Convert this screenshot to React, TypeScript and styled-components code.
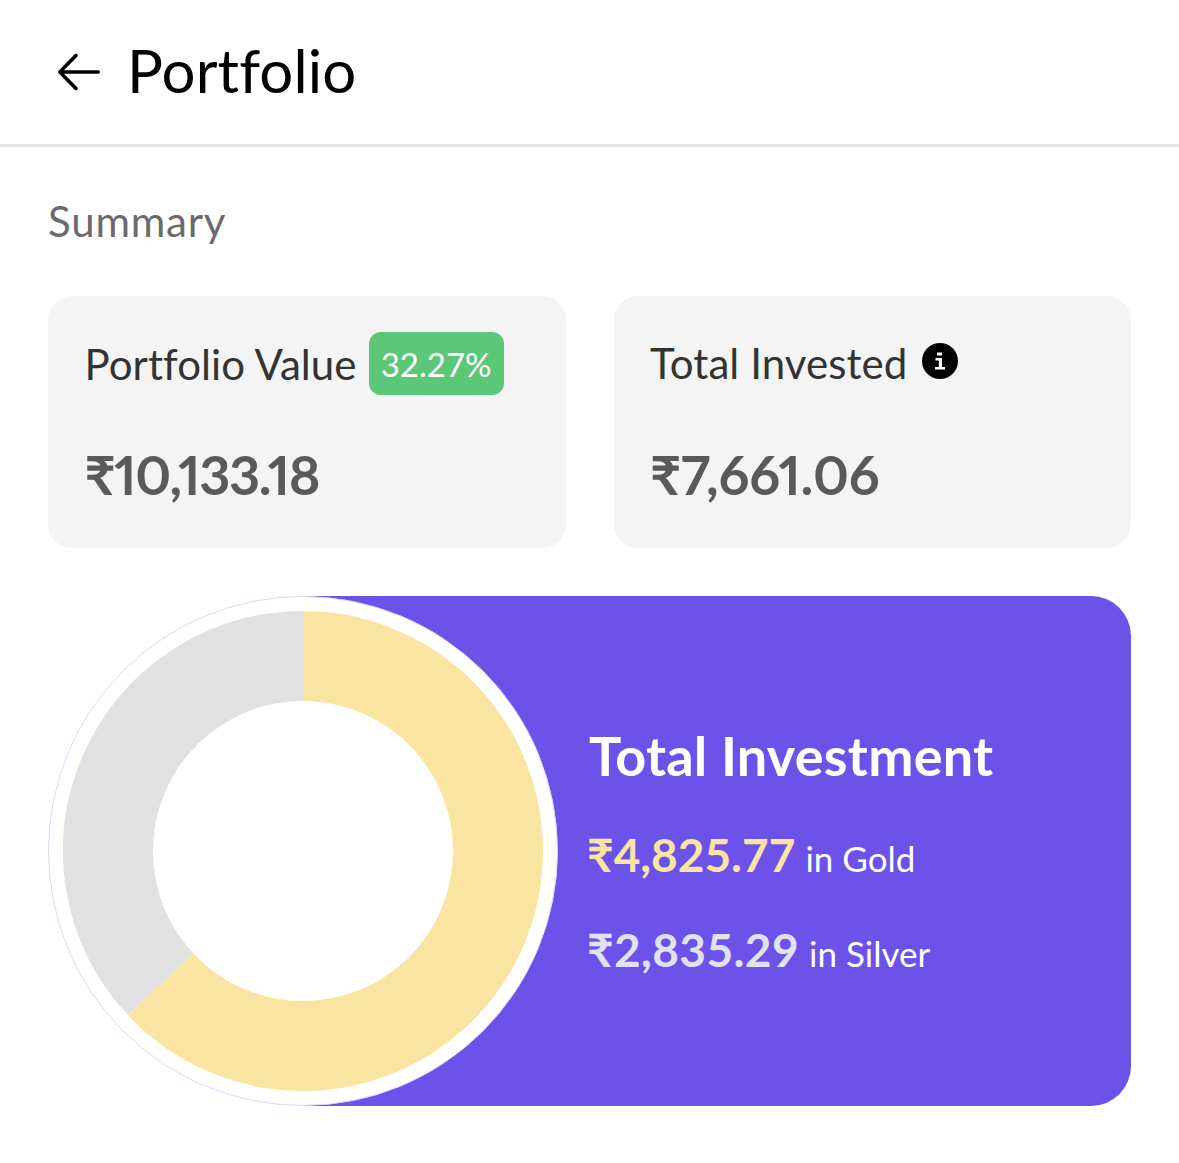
import styled, { createGlobalStyle } from "styled-components";

const GOLD_SHARE = 0.63;

const GlobalStyle = createGlobalStyle`
  html, body {
    margin: 0;
    padding: 0;
    background: #fff;
    font-family: "Lato", "Noto Sans", sans-serif;
  }
`;
const Page = styled.div`
  width: 1179px;
  height: 1163px;
  overflow: hidden;
`;
const Header = styled.header`
  height: 144px;
  display: flex;
  align-items: center;
  gap: 25px;
  padding-left: 56px;
  border-bottom: 3px solid #e5e5e7;
`;
const BackIcon = styled.svg`
  width: 46px;
  height: 46px;
  flex: none;
`;
const Title = styled.h1`
  margin: 0 0 4px;
  font-size: 60px;
  font-weight: 400;
  letter-spacing: 0.1px;
  color: #000;
  line-height: 1;
`;
const Content = styled.main`
  padding: 50px 48px 0;
`;
const SectionTitle = styled.h2`
  margin: 0 0 51px;
  font-size: 42px;
  line-height: 48px;
  font-weight: 400;
  letter-spacing: 0.8px;
  color: #6b6b6b;
`;
const Cards = styled.div`
  display: grid;
  grid-template-columns: 1fr 1fr;
  gap: 48px;
`;
const Card = styled.section`
  height: 252px;
  box-sizing: border-box;
  padding: 36px 36.5px 0;
  background: #f4f4f5;
  border-radius: 24px;
`;
const CardHead = styled.div`
  height: 63px;
  display: flex;
  align-items: center;
  gap: 12px;
`;
const CardLabel = styled.span<{ $lift?: number }>`
  margin-bottom: ${(props) => props.$lift ?? 0}px;
  font-size: 42px;
  font-weight: 400;
  letter-spacing: 0.08px;
  color: #333;
`;
const Badge = styled.span`
  width: 135px;
  height: 63px;
  display: flex;
  align-items: center;
  justify-content: center;
  border-radius: 12px;
  background: #5cc779;
  color: #fff;
  font-size: 33px;
`;
const InfoIcon = styled.svg`
  width: 36px;
  height: 36px;
  flex: none;
  margin: 0 0 5px 3px;
`;
const CardValue = styled.div<{ $track: number }>`
  margin-top: 48px;
  font-size: 54px;
  line-height: 64px;
  font-weight: 700;
  font-variant-numeric: proportional-nums;
  letter-spacing: ${(props) => props.$track}px;
  color: #5a5a5a;
`;
const Hero = styled.section`
  height: 510px;
  margin-top: 48px;
  display: flex;
  align-items: center;
  gap: 31px;
  border-radius: 40px;
  background: linear-gradient(to right, transparent 255px, #6d52ea 255px);
`;
const DonutWrap = styled.div`
  width: 510px;
  height: 510px;
  flex: none;
  box-sizing: border-box;
  border-radius: 50%;
  background: #fff;
  border: 1px solid #dcd7fb;
`;
const Donut = styled.svg`
  display: block;
  width: 100%;
  height: 100%;
`;
const HeroText = styled.div`
  display: flex;
  flex-direction: column;
  padding-top: 37px;
`;
const HeroTitle = styled.h3`
  margin: 0 0 37px;
  font-size: 54px;
  line-height: 64px;
  font-weight: 700;
  letter-spacing: 0.25px;
  color: #fff;
`;
const Holding = styled.div`
  display: flex;
  align-items: baseline;
  gap: 10px;
  height: 95px;
`;
const Amount = styled.span<{ $tone: string; $track?: number }>`
  margin-left: -2px;
  font-size: 46px;
  line-height: 60px;
  font-weight: 700;
  letter-spacing: ${(props) => props.$track ?? 0}px;
  color: ${(props) => props.$tone};
`;
const Metal = styled.span`
  font-size: 35px;
  color: #fff;
`;

function arc(r: number, fromDeg: number, toDeg: number) {
  const pt = (deg: number) => {
    const a = ((deg - 90) * Math.PI) / 180;
    return `${255 + r * Math.cos(a)} ${255 + r * Math.sin(a)}`;
  };
  const large = toDeg - fromDeg > 180 ? 1 : 0;
  return `M${pt(fromDeg)} A${r} ${r} 0 ${large} 1 ${pt(toDeg)}`;
}

export default function App() {
  const split = GOLD_SHARE * 360;
  return (
    <Page>
      <GlobalStyle />
      <Header>
        <BackIcon viewBox="0 0 46 46" fill="none" stroke="#000" strokeWidth="3.6" strokeLinecap="round" strokeLinejoin="round">
          <path d="M20 6.500 3.800 23 20 39.500M3.800 23h38.400" />
        </BackIcon>
        <Title>Portfolio</Title>
      </Header>
      <Content>
        <SectionTitle>Summary</SectionTitle>
        <Cards>
          <Card>
            <CardHead>
              <CardLabel>Portfolio Value</CardLabel>
              <Badge>32.27%</Badge>
            </CardHead>
            <CardValue $track={-1.4}>₹10,133.18</CardValue>
          </Card>
          <Card>
            <CardHead>
              <CardLabel $lift={2}>Total Invested</CardLabel>
              <InfoIcon viewBox="0 0 36 36">
                <circle cx="18" cy="18" r="18" fill="#000" />
                <path d="M15 9.500h5v3h-5zM13.500 15h6.500v9h3v2.500h-10V24h3.800v-6.500h-3.300z" fill="#fff" />
              </InfoIcon>
            </CardHead>
            <CardValue $track={-0.2}>₹7,661.06</CardValue>
          </Card>
        </Cards>
        <Hero>
          <DonutWrap>
            <Donut viewBox="1 1 508 508" fill="none" strokeWidth="90">
              <path d={arc(195, split, 360)} stroke="#e1e1e1" />
              <path d={arc(195, 0, split)} stroke="#fae4a1" />
            </Donut>
          </DonutWrap>
          <HeroText>
            <HeroTitle>Total Investment</HeroTitle>
            <Holding>
              <Amount $tone="#fae4a1">₹4,825.77</Amount>
              <Metal>in Gold</Metal>
            </Holding>
            <Holding>
              <Amount $tone="#e1e1ef" $track={0.4}>₹2,835.29</Amount>
              <Metal>in Silver</Metal>
            </Holding>
          </HeroText>
        </Hero>
      </Content>
    </Page>
  );
}
